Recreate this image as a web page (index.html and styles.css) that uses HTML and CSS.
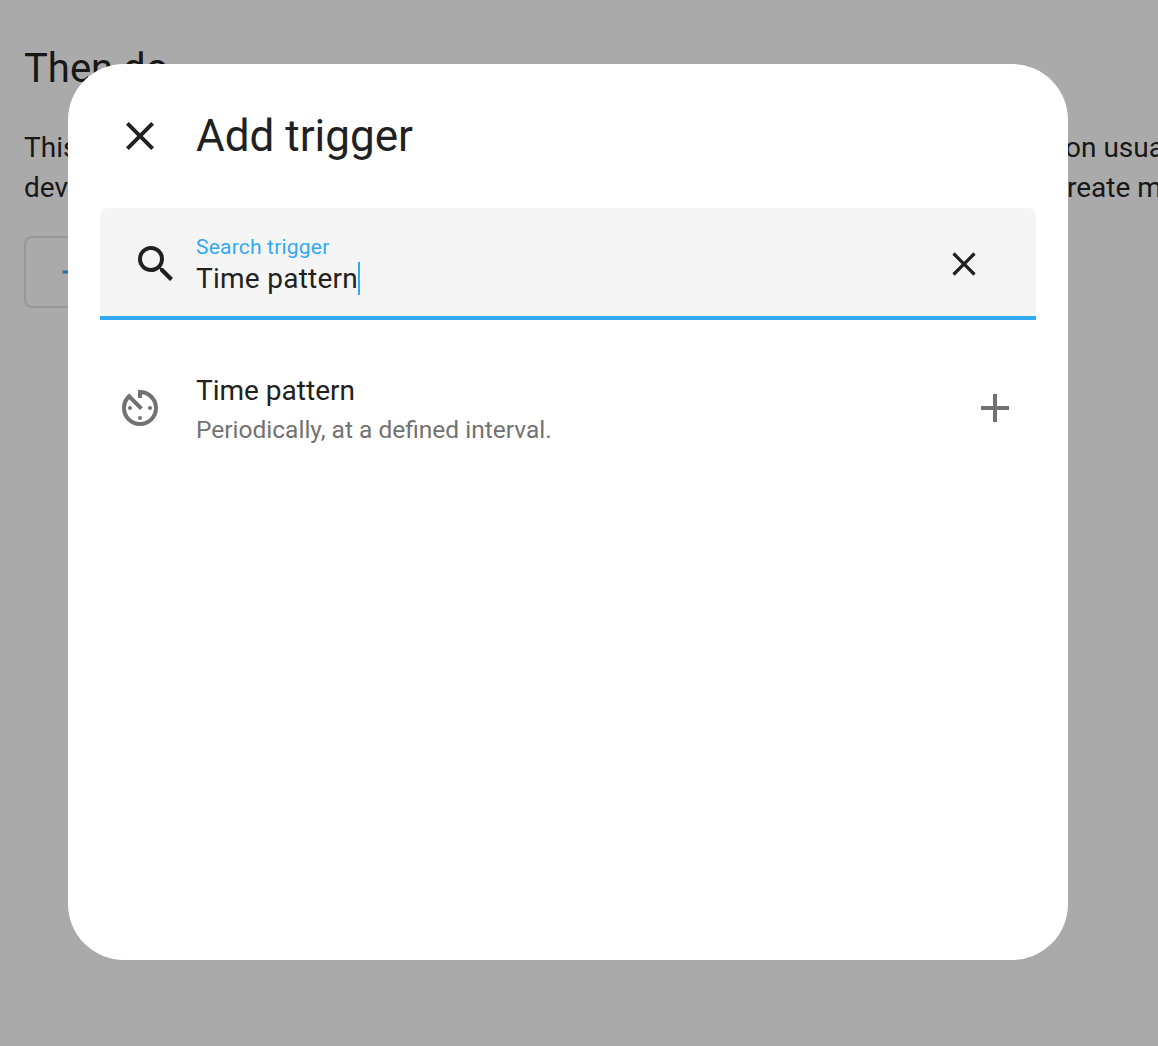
FILE: index.html
```html
<!DOCTYPE html>
<html lang="en">
<head>
<meta charset="utf-8">
<title>Add trigger</title>
<link rel="stylesheet" href="styles.css">
</head>
<body>
<main class="page">
  <h2 class="page-title">Then do</h2>
  <div class="description">
    <div class="line"><span>This</span><span class="line-end">on usually</span></div>
    <div class="line"><span>devi</span><span class="line-end line-end-second">reate more</span></div>
  </div>
  <div class="add-button">
    <svg class="add-icon" viewBox="0 0 24 24"><path d="M19,13H13V19H11V13H5V11H11V5H13V11H19V13Z"/></svg>
  </div>
</main>
<div class="scrim">
  <section class="dialog">
    <header class="header">
      <svg class="icon" viewBox="0 0 24 24"><path d="M19,6.41L17.59,5L12,10.59L6.41,5L5,6.41L10.59,12L5,17.59L6.41,19L12,13.41L17.59,19L19,17.59L13.41,12L19,6.41Z"/></svg>
      <h1 class="title">Add trigger</h1>
    </header>
    <div class="search">
      <svg class="icon" viewBox="0 0 24 24"><path d="M9.5,3A6.5,6.5 0 0,1 16,9.5C16,11.11 15.41,12.59 14.44,13.73L14.71,14H15.5L20.5,19L19,20.5L14,15.5V14.71L13.73,14.44C12.59,15.41 11.11,16 9.5,16A6.5,6.5 0 0,1 3,9.5A6.5,6.5 0 0,1 9.5,3M9.5,5C7,5 5,7 5,9.5C5,12 7,14 9.5,14C12,14 14,12 14,9.5C14,7 12,5 9.5,5Z"/></svg>
      <div class="field">
        <span class="label">Search trigger</span>
        <span class="value"><span>Time pattern</span><i class="caret"></i></span>
      </div>
      <svg class="icon icon-clear" viewBox="0 0 24 24"><path d="M19,6.41L17.59,5L12,10.59L6.41,5L5,6.41L10.59,12L5,17.59L6.41,19L12,13.41L17.59,19L19,17.59L13.41,12L19,6.41Z"/></svg>
    </div>
    <div class="item">
      <svg class="icon" viewBox="0 0 24 24"><path d="M11,17A1,1 0 0,0 12,18A1,1 0 0,0 13,17A1,1 0 0,0 12,16A1,1 0 0,0 11,17M11,3V7H13V5.08C16.39,5.57 19,8.47 19,12A7,7 0 0,1 12,19A7,7 0 0,1 5,12C5,10.32 5.59,8.78 6.58,7.58L12,13L13.41,11.59L6.61,4.79V4.81C4.42,6.45 3,9.05 3,12A9,9 0 0,0 12,21A9,9 0 0,0 21,12A9,9 0 0,0 12,3M18,12A1,1 0 0,0 17,11A1,1 0 0,0 16,12A1,1 0 0,0 17,13A1,1 0 0,0 18,12M6,12A1,1 0 0,0 7,13A1,1 0 0,0 8,12A1,1 0 0,0 7,11A1,1 0 0,0 6,12Z"/></svg>
      <div class="item-text">
        <span class="item-title">Time pattern</span>
        <span class="item-sub">Periodically, at a defined interval.</span>
      </div>
      <svg class="icon" viewBox="0 0 24 24"><path d="M19,13H13V19H11V13H5V11H11V5H13V11H19V13Z"/></svg>
    </div>
  </section>
</div>
</body>
</html>
```
FILE: styles.css
```css
* { box-sizing: border-box; }
body {
  margin: 0;
  height: 1046px;
  overflow: hidden;
  background: #fafafa;
  color: #212121;
  font-family: Roboto, sans-serif;
  font-size: 28px;
}
svg { display: block; fill: currentColor; flex: none; }
h1, h2 { margin: 0; font-weight: 400; }
.page {
  height: 1046px;
  padding: 45px 0 0 24px;
  overflow: hidden;
  background: #aaa;
  color: #171717;
}
.page-title { font-size: 40px; line-height: 48px; }
.description { margin-top: 35px; line-height: 40px; }
.line { display: flex; justify-content: space-between; white-space: nowrap; }
.line-end { width: 93px; }
.line-end-second { width: 91px; }
.add-button {
  display: flex;
  align-items: center;
  width: 400px;
  height: 72px;
  margin-top: 28px;
  padding-left: 29px;
  border: 2px solid #969696;
  border-radius: 8px;
  color: #1f77a8;
}
.add-icon { width: 36px; height: 36px; }
.scrim {
  position: absolute;
  inset: 0;
  padding: 64px 0 0 68px;
}
.dialog {
  width: 1000px;
  height: 896px;
  padding: 0 32px;
  background: #fff;
  border-radius: 56px;
}
.header {
  display: flex;
  align-items: center;
  gap: 32px;
  height: 144px;
  padding-left: 16px;
}
.title { font-size: 44px; line-height: 56px; }
.icon { width: 48px; height: 48px; }
.icon-clear { width: 40px; height: 40px; }
.search {
  display: flex;
  align-items: center;
  gap: 16px;
  height: 112px;
  padding: 4px 52px 0 32px;
  border-bottom: 4px solid #33a9f2;
  border-radius: 8px 8px 0 0;
  background: #f5f5f5;
}
.field { display: flex; flex: 1; flex-direction: column; gap: 1px; }
.label {
  color: #33a9f2;
  font-size: 21px;
  line-height: 28px;
  letter-spacing: .2px;
}
.value {
  display: flex;
  align-items: center;
  line-height: 34px;
  letter-spacing: .26px;
}
.caret { width: 2px; height: 33px; background: #33a9f2; }
.item {
  display: flex;
  align-items: center;
  gap: 32px;
  height: 144px;
  margin-top: 16px;
  padding: 0 17px 0 16px;
  color: #727272;
}
.item-text { display: flex; flex: 1; flex-direction: column; padding-top: 4px; }
.item-title { color: #212121; line-height: 40px; }
.item-sub { font-size: 24.5px; line-height: 38px; }
```
